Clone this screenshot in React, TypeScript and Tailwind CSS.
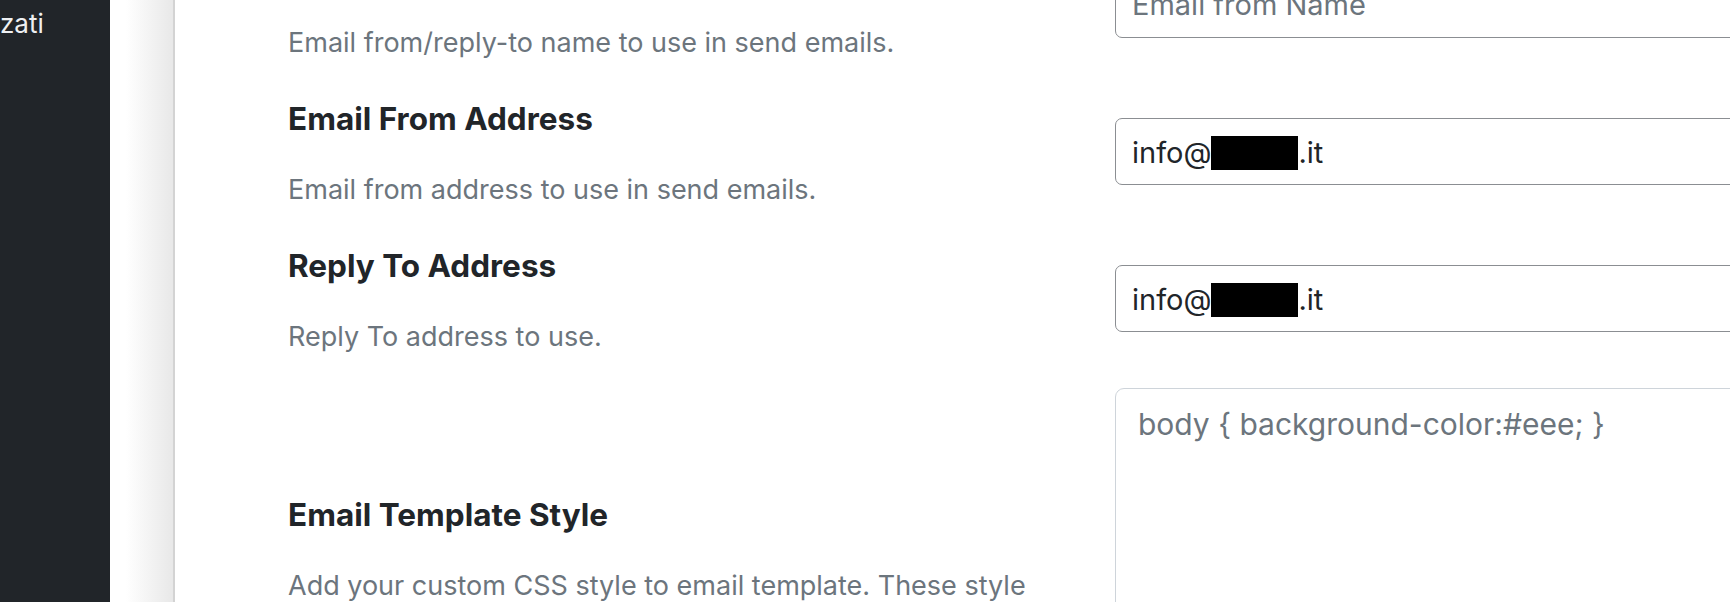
import React from "react";

interface Field {
  id: string;
  label: string;
  help: string;
  placeholder?: string;
  redacted?: boolean;
}

const fields: Field[] = [
  {
    id: "from_name",
    label: "Email From Name",
    help: "Email from/reply-to name to use in send emails.",
    placeholder: "Email from Name",
  },
  {
    id: "from_address",
    label: "Email From Address",
    help: "Email from address to use in send emails.",
    redacted: true,
  },
  {
    id: "reply_to",
    label: "Reply To Address",
    help: "Reply To address to use.",
    redacted: true,
  },
];

const Label: React.FC<{ label: string; help: string }> = ({ label, help }) => (
  <div className="w-[760px] shrink-0">
    <h3 className="text-[31.5px] leading-[36px] font-bold text-[#212529]">{label}</h3>
    <p className="mt-[37px] text-[27px] leading-[32px] text-[#6c757d]">{help}</p>
  </div>
);

const App: React.FC = () => {
  return (
    <div className="flex h-[602px] w-[1730px] overflow-hidden bg-white font-['Inter','Noto_Sans',sans-serif]">
      {/* sidebar */}
      <aside className="w-[110px] shrink-0 bg-[#212529] text-[#eef0f2]">
        <div className="pt-[6px] text-[26px] leading-[36px] whitespace-nowrap">zati</div>
      </aside>
      <div className="w-[63px] shrink-0 bg-linear-to-r from-white from-25% to-[#e8e8e8]" />

      {/* content */}
      <main className="flex-1 border-l-2 border-[#d3d3d3] bg-white pl-[113px]">
        <div className="-mt-[46px] flex flex-col gap-[42px]">
          {fields.map((field) => (
            <div key={field.id} className="flex items-start">
              <Label label={field.label} help={field.help} />
              <div className="ml-[67px] mt-[17px] w-[700px] shrink-0">
                {field.redacted ? (
                  <div className="flex h-[67px] items-center rounded-[7px] border-[1.5px] border-[#8b8e92] bg-white pl-[16px] pt-[2px] text-[29px] leading-[36px] text-[#212529]">
                    <span>info@</span>
                    <span className="inline-block h-[34px] w-[87px] bg-black" />
                    <span>.it</span>
                  </div>
                ) : (
                  <input
                    readOnly
                    placeholder={field.placeholder}
                    className="h-[67px] w-full rounded-[7px] border-[1.5px] border-[#8b8e92] bg-white px-[16px] text-[29px] text-[#212529] outline-none placeholder:text-[#6c757d]"
                  />
                )}
              </div>
            </div>
          ))}

          <div className="-mt-[7px] flex items-start">
            <div className="pt-[109px]">
              <Label
                label="Email Template Style"
                help="Add your custom CSS style to email template. These style will be added inside the head of every email."
              />
            </div>
            <div className="ml-[67px] w-[700px] shrink-0">
              <textarea
                readOnly
                placeholder="body { background-color:#eee; }"
                className="h-[360px] w-full resize-none rounded-[9px] border-[1.5px] border-[#ced4da] bg-white px-[22px] pt-[17px] text-[30px] leading-[36px] text-[#212529] outline-none placeholder:text-[#6c757d]"
              />
            </div>
          </div>
        </div>
      </main>
    </div>
  );
};

export default App;
